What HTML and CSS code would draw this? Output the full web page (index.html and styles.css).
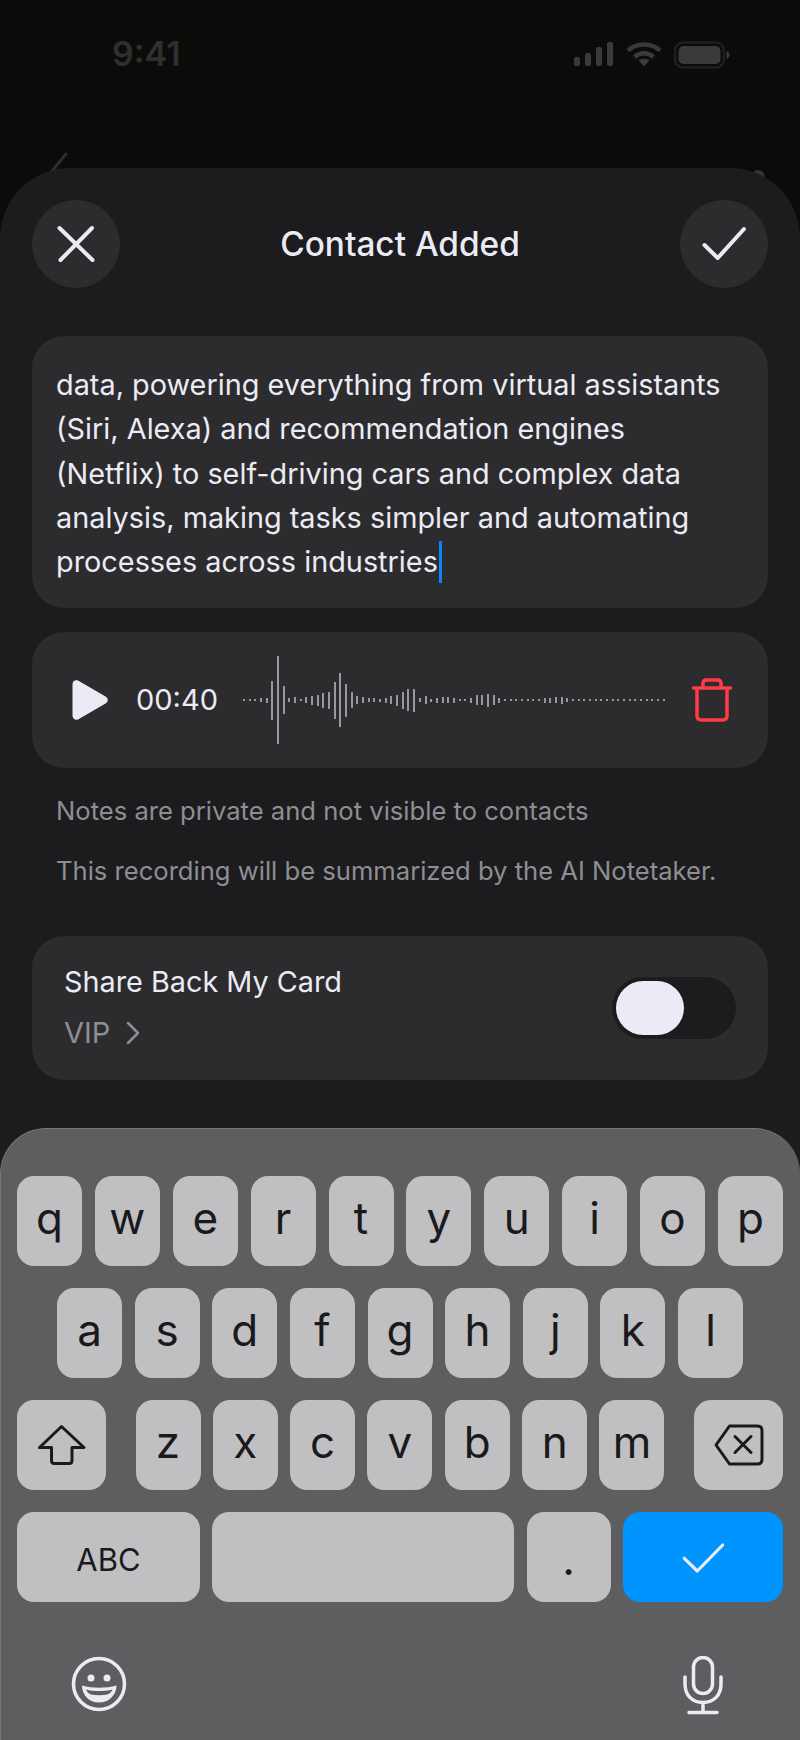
FILE: index.html
```html
<!DOCTYPE html>
<html lang="en">
<head>
<meta charset="utf-8">
<title>Contact Added</title>
<link rel="stylesheet" href="styles.css">
</head>
<body>
<div class="screen">
  <header class="status">
    <span class="clock">9:41</span>
    <div class="status-icons">
      <svg width="40" height="26" viewBox="0 0 40 26" class="signal"><rect x="0" y="15" width="6" height="9" rx="2"/><rect x="11" y="11" width="6" height="13" rx="2"/><rect x="22" y="5" width="6" height="19" rx="2"/><rect x="33" y="0" width="6" height="24" rx="2"/></svg>
      <svg width="36" height="26" viewBox="0 0 36 26" class="wifi"><path d="M2 8.500C11 .5 25 .5 34 8.500"/><path d="M8.500 15C14 10 22 10 27.500 15"/><path class="wifi-dot" d="M18 24.500L12.500 18.500C15.500 16 20.500 16 23.500 18.500Z"/></svg>
      <svg width="56" height="28" viewBox="0 0 56 28" class="battery"><rect class="batt-shell" x="1" y="1.500" width="49" height="25" rx="8"/><rect class="batt-fill" x="4.500" y="5" width="42" height="18" rx="5"/><path class="batt-fill" d="M52.500 10c2 .8 3 2.200 3 4s-1 3.200-3 4z"/></svg>
    </div>
  </header>
  <svg class="bg-back" width="24" height="34" viewBox="0 0 24 34"><path d="M20 2L2 24"/></svg>
  <span class="bg-dot"></span>

  <main class="sheet">
    <div class="sheet-head">
      <button class="round-btn" aria-label="Close">
        <svg width="44" height="44" viewBox="0 0 44 44"><path d="M5.500 6L38.500 38M38 6L6.500 38"/></svg>
      </button>
      <h1 class="title">Contact Added</h1>
      <button class="round-btn" aria-label="Done">
        <svg width="44" height="44" viewBox="0 0 44 44"><path d="M2.500 23L15.700 36L42 7"/></svg>
      </button>
    </div>

    <section class="card text-card">data, powering everything from virtual assistants<br>(Siri, Alexa) and recommendation engines<br>(Netflix) to self-driving cars and complex data<br>analysis, making tasks simpler and automating<br>processes across industries<span class="cursor"></span></section>

    <section class="card audio-card">
      <svg class="play" width="36" height="40" viewBox="0 0 36 40"><path d="M0.500 4.500C0.500 1 3.500-.6 6.500 .8L33.500 16.500C36.500 18.200 36.500 21.800 33.500 23.500L6.500 39.200C3.500 40.600 .5 39 .5 35.500Z"/></svg>
      <span class="time">00:40</span>
      <div class="wave">
        <i style="height:2px"></i><i style="height:2px"></i><i style="height:2px"></i><i style="height:4px"></i><i style="height:5px"></i><i style="height:39px"></i><i style="height:88px"></i><i style="height:28px"></i><i style="height:4px"></i><i style="height:6px"></i><i style="height:2px"></i><i style="height:6px"></i><i style="height:9px"></i><i style="height:11px"></i><i style="height:15px"></i><i style="height:17px"></i><i style="height:37px"></i><i style="height:54px"></i><i style="height:33px"></i><i style="height:16px"></i><i style="height:8px"></i><i style="height:6px"></i><i style="height:4px"></i><i style="height:4px"></i><i style="height:3px"></i><i style="height:5px"></i><i style="height:8px"></i><i style="height:11px"></i><i style="height:17px"></i><i style="height:22px"></i><i style="height:23px"></i><i style="height:4px"></i><i style="height:8px"></i><i style="height:3px"></i><i style="height:5px"></i><i style="height:6px"></i><i style="height:6px"></i><i style="height:5px"></i><i style="height:2px"></i><i style="height:2px"></i><i style="height:5px"></i><i style="height:10px"></i><i style="height:10px"></i><i style="height:13px"></i><i style="height:10px"></i><i style="height:5px"></i><i style="height:2px"></i><i style="height:2px"></i><i style="height:2px"></i><i style="height:2px"></i><i style="height:2px"></i><i style="height:2px"></i><i style="height:2px"></i><i style="height:5px"></i><i style="height:5px"></i><i style="height:6px"></i><i style="height:7px"></i><i style="height:4px"></i><i style="height:2px"></i><i style="height:2px"></i><i style="height:2px"></i><i style="height:2px"></i><i style="height:2px"></i><i style="height:2px"></i><i style="height:2px"></i><i style="height:2px"></i><i style="height:2px"></i><i style="height:2px"></i><i style="height:2px"></i><i style="height:2px"></i><i style="height:2px"></i><i style="height:2px"></i><i style="height:2px"></i><i style="height:2px"></i><i style="height:2px"></i>
      </div>
      <svg class="trash" width="40" height="44" viewBox="0 0 40 44"><path d="M1.500 10H38.500M11 9.500V5.500C11 3.300 12.500 2 14.500 2H25.500C27.500 2 29 3.300 29 5.500V9.500M5 10V37.500C5 40.500 6.500 42 9.500 42H30.500C33.500 42 35 40.500 35 37.500V10"/></svg>
    </section>

    <div class="notes">
      <p class="note">Notes are private and not visible to contacts</p>
      <p class="note">This recording will be summarized by the AI Notetaker.</p>
    </div>

    <section class="card share-card">
      <div class="share-text">
        <span class="share-title">Share Back My Card</span>
        <span class="share-sub">VIP
          <svg width="14" height="24" viewBox="0 0 14 24"><path d="M2 2L12 12L2 22"/></svg>
        </span>
      </div>
      <div class="toggle"><span class="knob"></span></div>
    </section>
  </main>

  <section class="keyboard">
    <div class="kb-row">
      <span class="key">q</span><span class="key">w</span><span class="key">e</span><span class="key">r</span><span class="key">t</span><span class="key">y</span><span class="key">u</span><span class="key">i</span><span class="key">o</span><span class="key">p</span>
    </div>
    <div class="kb-row kb-row-home">
      <span class="key">a</span><span class="key">s</span><span class="key">d</span><span class="key">f</span><span class="key">g</span><span class="key">h</span><span class="key">j</span><span class="key">k</span><span class="key">l</span>
    </div>
    <div class="kb-row kb-row-split">
      <span class="key key-mod">
        <svg width="50" height="42" viewBox="0 0 50 42"><path d="M24.500 2.500L47 23.500H35V36.500C35 38.500 33.800 39.500 32 39.500H17.500C15.700 39.500 14.500 38.500 14.500 36.500V23.500H2.500Z"/></svg>
      </span>
      <div class="kb-letters">
        <span class="key">z</span><span class="key">x</span><span class="key">c</span><span class="key">v</span><span class="key">b</span><span class="key">n</span><span class="key">m</span>
      </div>
      <span class="key key-mod">
        <svg width="50" height="42" viewBox="0 0 50 42"><path d="M15.500 2H43.500C46.500 2 48 3.500 48 6.500V35.500C48 38.500 46.500 40 43.500 40H15.500L2 21Z"/><path d="M21 12.500L37 28.500M37 12.500L21 28.500"/></svg>
      </span>
    </div>
    <div class="kb-row kb-row-bottom">
      <span class="key key-abc">ABC</span>
      <span class="key key-space"></span>
      <span class="key key-dot">.</span>
      <span class="key key-go">
        <svg width="42" height="32" viewBox="0 0 42 32"><path d="M2.300 17.300L15.300 30L40.700 4"/></svg>
      </span>
    </div>
    <div class="kb-tools">
      <svg class="emoji" width="56" height="56" viewBox="0 0 56 56">
        <circle class="emoji-face" cx="28" cy="28" r="25.500"/>
        <circle class="emoji-fill" cx="20" cy="22" r="3.500"/><circle class="emoji-fill" cx="36" cy="22" r="3.500"/>
        <path class="emoji-fill" d="M11 29.500C21 32.500 35 32.500 45.500 29.500C45.500 39 38 46.500 28 46.500C18 46.500 11 39 11 29.500Z"/>
        <path class="emoji-gap" d="M15 33.500C23 35.500 33 35.500 41.500 33.500C40.500 36 38.500 38 36 38.500C31 39.500 25 39.500 20 38.500C18 38 16 36 15 33.500Z"/>
      </svg>
      <svg class="mic" width="42" height="60" viewBox="0 0 42 60">
        <rect x="11.500" y="1.500" width="19" height="36" rx="9.500"/>
        <path d="M3 21V28C3 39 10 46.500 21 46.500C32 46.500 39 39 39 28V21M21 46.500V56.500M7 56.500H35"/>
      </svg>
    </div>
  </section>
</div>
</body>
</html>
```

FILE: styles.css
```css
* { box-sizing: border-box; }
html, body { margin: 0; padding: 0; background: #0b0b09; }
body { font-family: Inter, "Noto Sans", "Liberation Sans", sans-serif; }

.screen {
  position: relative;
  width: 800px;
  height: 1740px;
  overflow: hidden;
  background: #0b0b09;
  display: flex;
  flex-direction: column;
}

/* status bar */
.status {
  height: 168px;
  flex: none;
  padding: 34px 70px 0 112px;
  display: flex;
  justify-content: space-between;
  align-items: flex-start;
}
.clock {
  font-size: 34px;
  font-weight: 600;
  line-height: 40px;
  color: #2f2f2f;
}
.status-icons { display: flex; align-items: center; gap: 12px; padding-top: 7px; }
.signal rect { fill: #3a3a3a; }
.wifi path { fill: none; stroke: #3a3a3a; stroke-width: 4.500px; }
.wifi .wifi-dot { fill: #3a3a3a; stroke: none; }
.batt-shell { fill: none; stroke: #1f1f1d; stroke-width: 2.500px; }
.batt-fill { fill: #3a3a3a; }

.bg-back {
  position: absolute;
  left: 46px;
  top: 152px;
}
.bg-back path { fill: none; stroke: #2e2e2e; stroke-width: 3px; stroke-linecap: round; }
.bg-dot {
  position: absolute;
  left: 751px;
  top: 170px;
  width: 14px;
  height: 14px;
  border-radius: 50%;
  background: #333335;
}

/* sheet */
.sheet {
  position: relative;
  flex: 1;
  padding: 32px 32px 0;
  background: #1c1c1e;
  border-radius: 70px 70px 0 0;
}
.sheet-head {
  display: flex;
  align-items: center;
  justify-content: space-between;
  margin-bottom: 48px;
}
.round-btn {
  width: 88px;
  height: 88px;
  padding: 0;
  border: 0;
  border-radius: 50%;
  background: #2c2c2e;
  display: flex;
  align-items: center;
  justify-content: center;
}
.round-btn path {
  fill: none;
  stroke: #ebebf5;
  stroke-width: 4px;
  stroke-linecap: round;
  stroke-linejoin: round;
}
.title {
  margin: 0;
  font-size: 33.400px;
  font-weight: 500;
  line-height: 40px;
  color: #ebebf5;
}

.card { background: #2c2c2e; border-radius: 32px; }

.text-card {
  height: 272px;
  padding: 27px 24px 0;
  font-size: 28.850px;
  line-height: 44.300px;
  color: #ebebf5;
  white-space: nowrap;
}
.cursor {
  display: inline-block;
  width: 3px;
  height: 42px;
  margin-left: 1px;
  vertical-align: -11px;
  background: #0a84ff;
}

.audio-card {
  height: 136px;
  margin-top: 24px;
  padding-left: 40px;
  display: flex;
  align-items: center;
}
.play { flex: none; fill: #ebebf5; overflow: visible; }
.time {
  width: 80px;
  margin-left: 28px;
  flex: none;
  font-size: 29px;
  line-height: 36px;
  color: #ebebf5;
  white-space: nowrap;
}
.wave {
  width: 422px;
  height: 88px;
  margin-left: 27px;
  flex: none;
  display: flex;
  align-items: center;
  justify-content: space-between;
}
.wave i { display: block; width: 2px; background: #98989e; }
.trash { margin-left: 27px; flex: none; }
.trash path {
  fill: none;
  stroke: #ff3b45;
  stroke-width: 3.500px;
  stroke-linecap: round;
  stroke-linejoin: round;
}

.notes { padding: 25px 24px 47px; display: flex; flex-direction: column; gap: 24px; }
.note {
  margin: 0;
  font-size: 25.600px;
  line-height: 36px;
  color: #8e8e93;
  white-space: nowrap;
}

.share-card {
  height: 144px;
  padding: 0 32px;
  display: flex;
  align-items: center;
  justify-content: space-between;
}
.share-text { display: flex; flex-direction: column; gap: 15px; margin-top: -2px; }
.share-title { font-size: 28.800px; line-height: 36px; color: #ebebf5; }
.share-sub {
  display: flex;
  align-items: center;
  gap: 16px;
  font-size: 29px;
  line-height: 36px;
  color: #8e8e93;
}
.share-sub path { fill: none; stroke: #8e8e93; stroke-width: 2.500px; stroke-linecap: round; stroke-linejoin: round; }
.toggle {
  width: 124px;
  height: 62px;
  padding: 4px;
  border-radius: 31px;
  background: #1c1c1e;
}
.knob { display: block; width: 68px; height: 54px; border-radius: 27px; background: #ebebf5; }

/* keyboard */
.keyboard {
  position: absolute;
  left: 0;
  right: 0;
  bottom: 0;
  height: 612px;
  padding: 47px 17px 0 16px;
  background: #5e5e61;
  border-top: 1px solid #77777a;
  border-left: 1px solid #76767a;
  border-radius: 46px 46px 0 0;
}
.kb-row { display: flex; justify-content: space-between; margin-bottom: 22px; }
.kb-row-home { padding: 0 40px; }
.kb-letters { width: 529px; display: flex; justify-content: space-between; }
.key {
  width: 65px;
  height: 90px;
  flex: none;
  border-radius: 17px;
  background: #c0c0c2;
  color: #1a1a1c;
  display: flex;
  align-items: center;
  justify-content: center;
  font-size: 44px;
  line-height: 1;
  padding-bottom: 7px;
}
.key-mod { width: 89px; padding-bottom: 0; }
.key-mod path {
  fill: none;
  stroke: #1a1a1c;
  stroke-width: 3px;
  stroke-linecap: round;
  stroke-linejoin: round;
}
.key-abc { width: 183px; font-size: 31px; padding: 4px 0 0; }
.key-space { width: 302px; }
.key-dot { width: 84px; padding: 4px 0 0; }
.key-go { width: 160px; background: #0094ff; padding-bottom: 0; }
.key-go path {
  fill: none;
  stroke: #ebebf5;
  stroke-width: 3.200px;
  stroke-linecap: round;
  stroke-linejoin: round;
}

.kb-tools {
  padding: 32px 59px 0 54px;
  display: flex;
  justify-content: space-between;
  align-items: flex-start;
}
.emoji-face { fill: none; stroke: #ebebf5; stroke-width: 3.500px; }
.emoji-fill { fill: #ebebf5; }
.emoji-gap { fill: #5e5e61; }
.mic rect, .mic path {
  fill: none;
  stroke: #ebebf5;
  stroke-width: 3.500px;
  stroke-linecap: round;
}
```
